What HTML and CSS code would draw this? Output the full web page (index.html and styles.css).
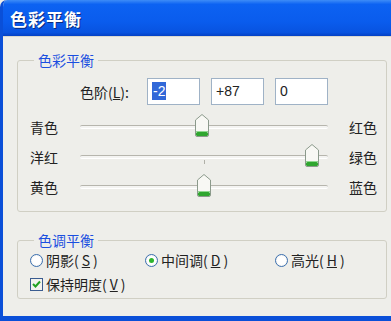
FILE: index.html
```html
<!DOCTYPE html>
<html lang="zh-CN">
<head>
    <meta charset="UTF-8">
    <title>色彩平衡</title>
    <link rel="stylesheet" href="styles.css">
</head>
<body>
    <div class="window">
        <div class="titlebar">
            <span class="title">色彩平衡</span>
        </div>
        <div class="content">
            <fieldset class="group">
                <legend>色彩平衡</legend>
                <div class="levels">
                    <span class="levels-label">色阶(<u>L</u>):</span>
                    <div class="field"><span class="selected">-2</span></div>
                    <div class="field">+87</div>
                    <div class="field">0</div>
                </div>
                <div class="slider-row">
                    <span class="side">青色</span>
                    <div class="track">
                        <svg class="thumb" style="left: 49%" width="14" height="23" viewBox="0 0 14 23">
                            <path d="M7 0.5 L13.5 6 L13.5 21 Q13.5 22.5 12 22.5 L2 22.5 Q0.5 22.5 0.5 21 L0.5 6 Z" fill="#f8f8f4" stroke="#8c9a8c"/>
                            <rect x="1" y="18" width="12" height="4" rx="1.5" fill="#2fa62f"/>
                            <rect x="1" y="17" width="12" height="1" fill="#8fd88f"/>
                        </svg>
                    </div>
                    <span class="side right">红色</span>
                </div>
                <div class="slider-row">
                    <span class="side">洋红</span>
                    <div class="track">
                        <div class="tick"></div>
                        <svg class="thumb" style="left: 93.5%" width="14" height="23" viewBox="0 0 14 23">
                            <path d="M7 0.5 L13.5 6 L13.5 21 Q13.5 22.5 12 22.5 L2 22.5 Q0.5 22.5 0.5 21 L0.5 6 Z" fill="#f8f8f4" stroke="#8c9a8c"/>
                            <rect x="1" y="18" width="12" height="4" rx="1.5" fill="#2fa62f"/>
                            <rect x="1" y="17" width="12" height="1" fill="#8fd88f"/>
                        </svg>
                    </div>
                    <span class="side right">绿色</span>
                </div>
                <div class="slider-row">
                    <span class="side">黄色</span>
                    <div class="track">
                        <svg class="thumb" style="left: 50%" width="14" height="23" viewBox="0 0 14 23">
                            <path d="M7 0.5 L13.5 6 L13.5 21 Q13.5 22.5 12 22.5 L2 22.5 Q0.5 22.5 0.5 21 L0.5 6 Z" fill="#f8f8f4" stroke="#8c9a8c"/>
                            <rect x="1" y="18" width="12" height="4" rx="1.5" fill="#2fa62f"/>
                            <rect x="1" y="17" width="12" height="1" fill="#8fd88f"/>
                        </svg>
                    </div>
                    <span class="side right">蓝色</span>
                </div>
            </fieldset>

            <fieldset class="group tone">
                <legend>色调平衡</legend>
                <div class="radio-row">
                    <label class="option"><span class="radio"></span>阴影(<u>S</u>)</label>
                    <label class="option mid"><span class="radio checked"></span>中间调(<u>D</u>)</label>
                    <label class="option"><span class="radio"></span>高光(<u>H</u>)</label>
                </div>
                <label class="option check-row"><span class="checkbox">
                    <svg width="9" height="8" viewBox="0 0 9 8"><path d="M1 4 L3.5 6.5 L8 1.5" fill="none" stroke="#21a121" stroke-width="2"/></svg>
                </span>保持明度(<u>V</u>)</label>
            </fieldset>
        </div>
    </div>
</body>
</html>
```

FILE: styles.css
```css
* {
    margin: 0;
    padding: 0;
    box-sizing: border-box;
}

body {
    font-family: "Noto Sans CJK SC", "DejaVu Sans", sans-serif;
    font-size: 14px;
    color: #222;
    background: #eeeeea;
}

.window {
    width: 391px;
    height: 321px;
    display: flex;
    flex-direction: column;
    border-left: 3px solid #0a4fd8;
    border-bottom: 5px solid #0a4fd8;
    border-top-left-radius: 7px;
    overflow: hidden;
    background: #eeeeea;
}

.titlebar {
    flex-shrink: 0;
    height: 37px;
    background: linear-gradient(to bottom, #3d8cf7 0%, #0c62f2 12%, #0a5ced 60%, #0853e0 90%, #0340c4 100%);
    border-bottom: 1px solid #d8d8d0;
    display: flex;
    align-items: center;
    padding-left: 7px;
}

.title {
    color: #fff;
    font-size: 17px;
    font-weight: bold;
    letter-spacing: 1px;
    text-shadow: 1px 1px 0 #0a2c80;
}

.content {
    flex: 1;
    padding: 15px 4px 0 14px;
}

.group {
    border: 1px solid #d0cfc4;
    border-radius: 3px;
    padding: 6px 0 9px 12px;
    margin-bottom: 20px;
}

.group legend {
    color: #1a4fe0;
    padding: 0 4px;
    margin-left: 4px;
    line-height: 16px;
    height: 16px;
}

.levels {
    display: flex;
    align-items: center;
    gap: 11px;
    padding-left: 50px;
    height: 27px;
    margin-top: 4px;
    margin-bottom: 7px;
}

.levels-label {
    width: 61px;
    margin-right: -5px;
}

.field {
    width: 53px;
    height: 27px;
    border: 1px solid #9fb2c6;
    background: #fff;
    padding: 3px 4px;
    line-height: 19px;
    font-family: "Liberation Sans", sans-serif;
    font-size: 14px;
}

.selected {
    background: #3168d8;
    color: #fff;
    padding: 1px 1px;
}

.slider-row {
    display: flex;
    align-items: center;
    height: 30px;
}

.side {
    width: 50px;
}

.side.right {
    width: auto;
    margin-left: 21px;
}

.track {
    position: relative;
    width: 248px;
    height: 4px;
    background: #f4f4f2;
    border-top: 1px solid #b6b5ad;
    border-bottom: 1px solid #fff;
    border-radius: 2px;
}

.tick {
    position: absolute;
    left: 50%;
    top: 4px;
    width: 1px;
    height: 4px;
    background: #b0b0a8;
}

.thumb {
    position: absolute;
    top: -12px;
    margin-left: -7px;
}

.tone {
    padding-top: 0;
    padding-bottom: 2px;
}

.radio-row {
    display: flex;
    height: 24px;
    align-items: center;
}

.option {
    display: flex;
    align-items: center;
    gap: 3px;
}

.option:first-child {
    width: 115px;
}

.option.mid {
    width: 130px;
}

.radio {
    width: 13px;
    height: 13px;
    border-radius: 50%;
    border: 1px solid #3a6fb0;
    background: radial-gradient(circle, #fff 50%, #e2e2dc 100%);
    display: flex;
    align-items: center;
    justify-content: center;
}

.radio.checked::after {
    content: "";
    width: 5px;
    height: 5px;
    border-radius: 50%;
    background: #2db52d;
}

.check-row {
    height: 24px;
}

.checkbox {
    width: 13px;
    height: 13px;
    border: 1px solid #3a5c90;
    background: #f2f2ee;
    display: flex;
    align-items: center;
    justify-content: center;
}
```
